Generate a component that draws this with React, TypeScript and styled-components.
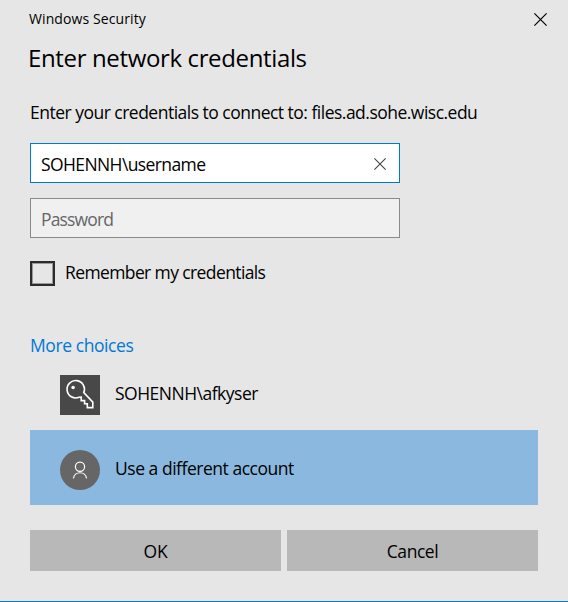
import React, { useState } from 'react';
import styled, { createGlobalStyle } from 'styled-components';

const GlobalStyle = createGlobalStyle`
  * { box-sizing: border-box; }
  body {
    margin: 0;
    background: #e6e6e6;
    color: #000;
    font-family: "Segoe UI", "Open Sans", "Noto Sans", sans-serif;
  }
`;

const Dialog = styled.main`
  width: 568px;
  height: 602px;
  display: flex;
  flex-direction: column;
  padding: 0 30px;
  background: #e6e6e6;
  border-bottom: 1px solid #1476c8;
  overflow: hidden;
`;

const TitleBar = styled.header`
  height: 38px;
  margin: 0 -9px 0 -1px;
  display: flex;
  align-items: center;
  justify-content: space-between;
`;

const Label = styled.span<{ $size?: number; $spacing?: number }>`
  font-size: ${p => p.$size ?? 17.5}px;
  letter-spacing: ${p => p.$spacing ?? -0.5}px;
  line-height: 24px;
  white-space: nowrap;
`;

const IconButton = styled.button`
  border: 0;
  padding: 0;
  background: transparent;
  display: flex;
`;

const Heading = styled.h1`
  margin: 3px 0 0 -2px;
  height: 34px;
  line-height: 34px;
  font-size: 24px;
  font-weight: 400;
  letter-spacing: -0.36px;
  white-space: nowrap;
`;

const Message = styled.p`
  margin: 25px 0 0;
  height: 43px;
  line-height: 24px;
`;

const Field = styled.div<{ $active?: boolean }>`
  width: 370px;
  height: 40px;
  margin-bottom: 15px;
  padding: 2px 13px 0 10px;
  display: flex;
  align-items: center;
  justify-content: space-between;
  color: ${p => (p.$active ? '#000' : '#666')};
  background: ${p => (p.$active ? '#fff' : '#f0f0f0')};
  border: 1px solid ${p => (p.$active ? '#0078d7' : '#8a8a8a')};
`;

const Remember = styled.label`
  height: 25px;
  margin-top: 8px;
  display: flex;
  align-items: center;
  gap: 10px;
`;

const RememberText = styled.span`
  display: flex;
  padding-bottom: 3px;
`;

const Checkbox = styled.input`
  appearance: none;
  width: 25px;
  height: 25px;
  margin: 0;
  border: 2px solid #2b2b2b;
  box-shadow: inset 0 0 0 1px #999;
`;

const MoreChoices = styled.a`
  margin-top: 47px;
  height: 42px;
  line-height: 24px;
  color: #0078d7;
`;

const AccountList = styled.div`
  display: flex;
  flex-direction: column;
  gap: 15px;
`;

const Account = styled.div<{ $selected?: boolean }>`
  height: ${p => (p.$selected ? 75 : 40)}px;
  padding: ${p => (p.$selected ? '4px 30px 0' : '0 30px')};
  display: flex;
  align-items: center;
  gap: 15px;
  background: ${p => (p.$selected ? '#8ab8df' : 'transparent')};
`;

const AccountName = styled(Label)`
  padding-bottom: 4px;
`;

const AccountIcon = styled.svg`
  width: 40px;
  height: 40px;
  flex: none;
`;

const Actions = styled.footer`
  margin-top: 25px;
  display: grid;
  grid-template-columns: 1fr 1fr;
  gap: 6px;
`;

const ActionButton = styled.button`
  height: 41px;
  padding: 0;
  border: 0;
  color: #000;
  background: #b8b8b8;
  font-family: inherit;
`;

const Cross = ({ size, color }: { size: number; color: string }) => (
  <svg width={size} height={size} viewBox="0 0 13 13" fill="none" stroke={color} strokeWidth="1.2">
    <path d="M.4.4l12.2 12.2M12.6.4L.4 12.6" />
  </svg>
);

const KeyIcon = () => (
  <AccountIcon viewBox="0 0 40 40" fill="none" stroke="#fff" strokeWidth="1.6">
    <rect width="40" height="40" fill="#484848" stroke="none" />
    <path d="M23.8 17.5A8.7 8.7 0 1 0 19 22.3L21.2 22.2V25.6H24.6V28.8H27.3V32.6H32.8V27.1Z" />
    <circle cx="13.1" cy="12.5" r="1.8" fill="#fff" stroke="none" />
  </AccountIcon>
);

const PersonIcon = () => (
  <AccountIcon viewBox="0 0 40 40" fill="none" stroke="#fff" strokeWidth="1.2">
    <circle cx="20" cy="20" r="20" fill="#666" stroke="none" />
    <circle cx="20" cy="16.8" r="4.6" />
    <path d="M13.4 28.3a6.7 6.7 0 0 1 13.2 0" />
  </AccountIcon>
);

export default function App() {
  const [remember, setRemember] = useState(false);
  return (
    <>
      <GlobalStyle />
      <Dialog>
        <TitleBar>
          <Label $size={14} $spacing={0.1}>Windows Security</Label>
          <IconButton aria-label="Close"><Cross size={13} color="#000" /></IconButton>
        </TitleBar>
        <Heading>Enter network credentials</Heading>
        <Message><Label $spacing={-0.51}>Enter your credentials to connect to: files.ad.sohe.wisc.edu</Label></Message>
        <Field $active>
          <Label $spacing={-0.6}>SOHENNH\username</Label>
          <IconButton aria-label="Clear"><Cross size={12} color="#444" /></IconButton>
        </Field>
        <Field><Label $spacing={-0.85}>Password</Label></Field>
        <Remember>
          <Checkbox type="checkbox" checked={remember} onChange={e => setRemember(e.target.checked)} />
          <RememberText><Label $spacing={-0.61}>Remember my credentials</Label></RememberText>
        </Remember>
        <MoreChoices><Label $spacing={-0.42}>More choices</Label></MoreChoices>
        <AccountList>
          <Account><KeyIcon /><AccountName>SOHENNH\afkyser</AccountName></Account>
          <Account $selected><PersonIcon /><AccountName $spacing={-0.47}>Use a different account</AccountName></Account>
        </AccountList>
        <Actions>
          <ActionButton><Label $spacing={-0.1}>OK</Label></ActionButton>
          <ActionButton><Label $spacing={-0.45}>Cancel</Label></ActionButton>
        </Actions>
      </Dialog>
    </>
  );
}
